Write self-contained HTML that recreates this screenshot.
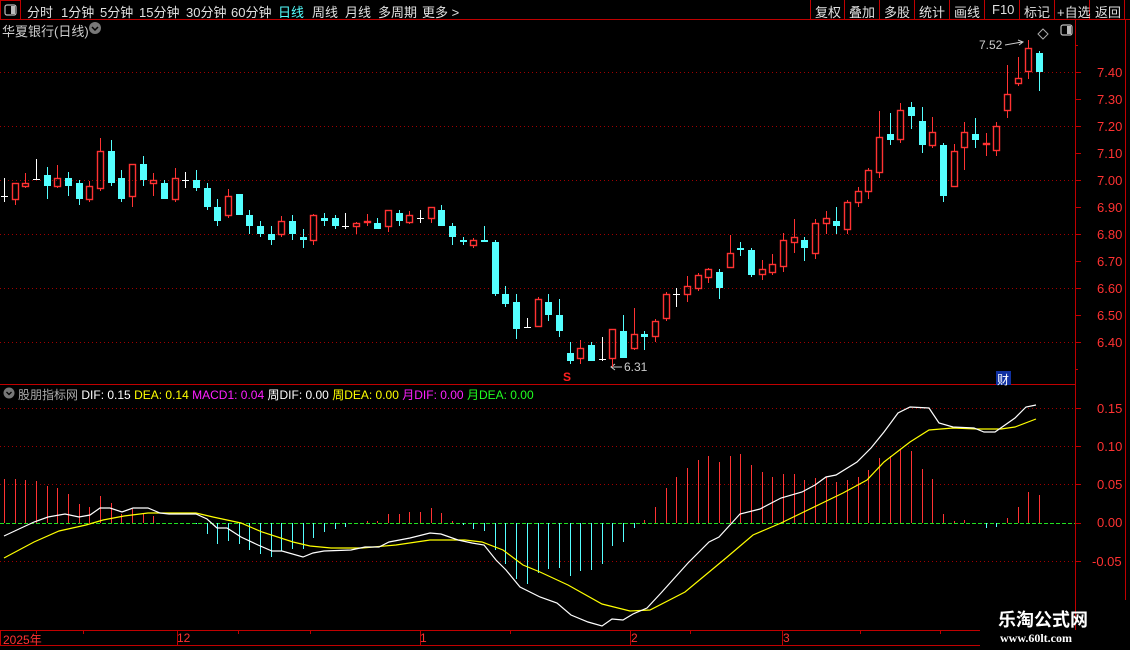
<!DOCTYPE html>
<html><head><meta charset="utf-8">
<style>
body{margin:0;background:#000;width:1130px;height:650px;overflow:hidden;position:relative;font-family:"Liberation Sans","Noto Sans CJK SC",sans-serif;}
.t{position:absolute;font-size:12px;color:#e0e0e0;white-space:nowrap;}
svg{position:absolute;left:0;top:0;}
</style></head><body>
<svg id="s" width="1130" height="650" xmlns="http://www.w3.org/2000/svg">
<g id="grid"></g>
<line x1="0" y1="19.5" x2="1130" y2="19.5" stroke="#c00000"/>
<rect x="0.5" y="0.5" width="20" height="19" fill="none" stroke="#c00000"/>
<rect x="5" y="5" width="11" height="10" rx="2" fill="none" stroke="#bbb" stroke-width="1.2"/>
<rect x="11" y="6" width="4" height="8" fill="#bbb"/>
<g stroke="#c00000">
<line x1="810.5" y1="0" x2="810.5" y2="19"/><line x1="844.5" y1="0" x2="844.5" y2="19"/><line x1="879.5" y1="0" x2="879.5" y2="19"/><line x1="914.5" y1="0" x2="914.5" y2="19"/><line x1="949.5" y1="0" x2="949.5" y2="19"/><line x1="984.5" y1="0" x2="984.5" y2="19"/><line x1="1019.5" y1="0" x2="1019.5" y2="19"/><line x1="1054.5" y1="0" x2="1054.5" y2="19"/><line x1="1089.5" y1="0" x2="1089.5" y2="19"/><line x1="1124.5" y1="0" x2="1124.5" y2="19"/>
<line x1="1075.5" y1="20" x2="1075.5" y2="630"/>
<line x1="1125.5" y1="20" x2="1125.5" y2="600"/>
<line x1="0" y1="384.5" x2="1075" y2="384.5"/>
<line x1="0" y1="630.5" x2="980" y2="630.5"/>
<line x1="0" y1="645.5" x2="980" y2="645.5"/>
</g>
<circle cx="95" cy="28" r="6" fill="#777"/><path d="M92 27 L95 30 L98 27" stroke="#000" stroke-width="1.5" fill="none"/>
<circle cx="9" cy="393" r="5.5" fill="#777"/><path d="M6.5 392 L9 394.5 L11.5 392" stroke="#000" stroke-width="1.3" fill="none"/>
<path d="M1043 29 L1048 34 L1043 39 L1038 34 Z" fill="none" stroke="#aaa"/>
<rect x="1061" y="25" width="11" height="10" rx="2" fill="none" stroke="#bbb" stroke-width="1.2"/><rect x="1067" y="26" width="4" height="8" fill="#bbb"/>
<path d="M1005 45 L1022 42 M1018 40 L1023 42 L1019 45" stroke="#ccc" fill="none"/>
<path d="M622 367 L612 367 M615 364 L611 367 L615 370" stroke="#ccc" fill="none"/>
<rect x="996" y="371" width="15" height="14" fill="#1030a0"/>
<g id="c"></g>
<g id="tick" stroke="#c00000"></g>
</svg>
<div class="t" style="left:27px;top:2px;font-size:13px">分时</div>
<div class="t" style="left:61px;top:2px;font-size:13px">1分钟</div>
<div class="t" style="left:100px;top:2px;font-size:13px">5分钟</div>
<div class="t" style="left:139px;top:2px;font-size:13px">15分钟</div>
<div class="t" style="left:186px;top:2px;font-size:13px">30分钟</div>
<div class="t" style="left:231px;top:2px;font-size:13px">60分钟</div>
<div class="t" style="left:278px;top:2px;font-size:13px;color:#54ffff">日线</div>
<div class="t" style="left:312px;top:2px;font-size:13px">周线</div>
<div class="t" style="left:345px;top:2px;font-size:13px">月线</div>
<div class="t" style="left:378px;top:2px;font-size:13px">多周期</div>
<div class="t" style="left:422px;top:2px;font-size:13px">更多 &gt;</div>
<div class="t" style="left:815px;top:2px;font-size:13px">复权</div>
<div class="t" style="left:849px;top:2px;font-size:13px">叠加</div>
<div class="t" style="left:884px;top:2px;font-size:13px">多股</div>
<div class="t" style="left:919px;top:2px;font-size:13px">统计</div>
<div class="t" style="left:954px;top:2px;font-size:13px">画线</div>
<div class="t" style="left:992px;top:2px;font-size:13px">F10</div>
<div class="t" style="left:1024px;top:2px;font-size:13px">标记</div>
<div class="t" style="left:1057px;top:2px;font-size:13px">+自选</div>
<div class="t" style="left:1095px;top:2px;font-size:13px">返回</div>
<div class="t" style="left:2px;top:21px;font-size:13px;color:#ccc">华夏银行(日线)</div>
<div class="t" style="left:979px;top:38px;color:#ccc">7.52</div>
<div class="t" style="left:624px;top:360px;color:#ccc">6.31</div>
<div class="t" style="left:563px;top:370px;color:#ff2020;font-weight:bold">S</div>
<div class="t" style="left:997px;top:371px;color:#fff">财</div>
<div class="t" style="left:18px;top:386px;font-size:12px"><span style="color:#aaa">股朋指标网</span> <span style="color:#fff">DIF: 0.15</span> <span style="color:#ffff00">DEA: 0.14</span> <span style="color:#ff20ff">MACD1: 0.04</span> <span style="color:#fff">周DIF: 0.00</span> <span style="color:#ffff00">周DEA: 0.00</span> <span style="color:#ff20ff">月DIF: 0.00</span> <span style="color:#20ff20">月DEA: 0.00</span></div>
<div class="t" style="left:1097px;top:65px;color:#ff3232;font-size:13px">7.40</div>
<div class="t" style="left:1097px;top:92px;color:#ff3232;font-size:13px">7.30</div>
<div class="t" style="left:1097px;top:119px;color:#ff3232;font-size:13px">7.20</div>
<div class="t" style="left:1097px;top:146px;color:#ff3232;font-size:13px">7.10</div>
<div class="t" style="left:1097px;top:173px;color:#ff3232;font-size:13px">7.00</div>
<div class="t" style="left:1097px;top:200px;color:#ff3232;font-size:13px">6.90</div>
<div class="t" style="left:1097px;top:227px;color:#ff3232;font-size:13px">6.80</div>
<div class="t" style="left:1097px;top:254px;color:#ff3232;font-size:13px">6.70</div>
<div class="t" style="left:1097px;top:281px;color:#ff3232;font-size:13px">6.60</div>
<div class="t" style="left:1097px;top:308px;color:#ff3232;font-size:13px">6.50</div>
<div class="t" style="left:1097px;top:335px;color:#ff3232;font-size:13px">6.40</div>
<div class="t" style="left:1097px;top:401px;color:#ff3232;font-size:13px">0.15</div>
<div class="t" style="left:1097px;top:439px;color:#ff3232;font-size:13px">0.10</div>
<div class="t" style="left:1097px;top:477px;color:#ff3232;font-size:13px">0.05</div>
<div class="t" style="left:1097px;top:515px;color:#ff3232;font-size:13px">0.00</div>
<div class="t" style="left:1092px;top:554px;color:#ff3232;font-size:13px">-0.05</div>
<div class="t" style="left:3px;top:631px;color:#ff3232">2025年</div>
<div class="t" style="left:177px;top:631px;color:#ff3232">12</div>
<div class="t" style="left:420px;top:631px;color:#ff3232">1</div>
<div class="t" style="left:631px;top:631px;color:#ff3232">2</div>
<div class="t" style="left:783px;top:631px;color:#ff3232">3</div>
<div class="t" style="left:998px;top:606px;color:#fff;font-size:18px;font-weight:bold">乐淘公式网</div>
<div class="t" style="left:1000px;top:631px;color:#fff;font-size:12px;font-family:'Liberation Serif',serif;font-weight:bold">www.60lt.com</div>
<script>
var NS="http://www.w3.org/2000/svg",g=document.getElementById('c'),gr=document.getElementById('grid'),tk=document.getElementById('tick');
function el(p,t,a){var e=document.createElementNS(NS,t);for(var k in a)e.setAttribute(k,a[k]);p.appendChild(e);return e;}
[72,126,180,234,288,342,408,446,484,561].forEach(function(y){el(gr,'line',{x1:0,y1:y+.5,x2:1075,y2:y+.5,stroke:'#a00000','stroke-dasharray':'1 3'});});
el(gr,'line',{x1:0,y1:523.5,x2:1075,y2:523.5,stroke:'#20e020','stroke-dasharray':'4 2'});
for(var y=72;y<=342;y+=27){el(tk,'line',{x1:1075,y1:y+.5,x2:1081,y2:y+.5});}
for(var y=45;y<=370;y+=27){el(tk,'line',{x1:1075,y1:y+.5,x2:1078,y2:y+.5});}
[408,446,484,523,561].forEach(function(y){el(tk,'line',{x1:1075,y1:y+.5,x2:1081,y2:y+.5});});
[0,36,83,177,238,310,420,510,630,690,782,860,940].forEach(function(x){el(tk,'line',{x1:x+.5,y1:630,x2:x+.5,y2:(x==177||x==420||x==630||x==782||x==0)?645:634});});
var C="W 196 196 178 202|R 183 200 183 205|R 183 187 173 188|W 179 179 159 180|C 175 186 167 199|R 178 187 165 188|C 178 186 172 196|C 183 199 180 205|R 186 200 181 202|R 151 189 138 191|C 151 183 140 186|C 178 199 170 202|R 164 197 164 207|C 164 180 156 186|R 180 184 173 196|C 183 199 180 199|R 178 200 168 202|W 180 180 172 188|C 180 188 170 191|C 188 207 183 210|C 207 221 199 226|R 196 216 189 218|C 194 215 194 215|C 215 226 210 234|C 226 234 221 237|C 234 240 226 245|R 221 235 216 237|C 221 234 215 240|C 237 240 229 248|R 215 241 214 245|C 218 221 213 226|C 218 226 215 229|W 226 226 213 229|R 223 227 222 234|R 221 223 214 226|C 223 229 218 229|R 210 227 210 232|C 213 221 210 226|R 215 223 211 224|W 218 218 210 223|R 207 219 207 223|C 210 226 205 226|C 226 237 223 245|C 240 242 237 245|R 240 246 238 248|C 240 242 226 242|C 242 294 240 296|C 294 304 286 307|C 302 329 294 339|W 327 327 318 328|R 299 327 297 327|C 302 315 294 321|C 315 331 299 337|C 353 361 342 364|R 348 359 340 364|C 345 361 342 361|W 359 359 337 361|R 329 359 329 367|C 331 358 315 358|R 334 349 308 350|C 334 337 331 350|R 321 337 319 342|R 294 319 292 321|W 294 294 288 307|R 286 295 276 302|R 275 289 273 291|R 269 278 268 283|C 272 288 269 299|R 253 268 235 268|C 248 250 242 256|C 250 275 248 277|R 269 275 260 280|R 264 273 254 275|R 240 267 233 272|R 237 243 219 253|C 240 248 237 261|R 223 254 219 259|R 218 224 211 234|C 221 226 207 234|R 202 230 200 234|R 191 203 187 207|R 170 192 168 199|R 137 173 111 178|C 134 140 113 145|R 110 140 103 143|C 107 116 102 129|C 121 145 107 153|R 132 146 117 148|C 145 196 143 202|R 151 187 144 187|R 132 148 122 170|C 134 140 118 148|R 143 145 133 156|R 126 151 122 156|R 94 111 65 118|R 78 84 57 86|R 48 72 40 79|C 53 72 51 91".split('|');
C.forEach(function(s,i){var p=s.split(' '),t=p[0],a=+p[1],b=+p[2],h=+p[3],l=+p[4],x=Math.round(4+10.67*i);
 var col=t=='R'?'#ff3232':t=='C'?'#54ffff':'#ffffff';
 if(t=='W'){el(g,'line',{x1:x+.5,y1:h,x2:x+.5,y2:l,stroke:col});el(g,'line',{x1:x-3,y1:a+.5,x2:x+4,y2:a+.5,stroke:col});return;}
 if(h<a)el(g,'line',{x1:x+.5,y1:h,x2:x+.5,y2:a,stroke:col});
 if(l>b)el(g,'line',{x1:x+.5,y1:b,x2:x+.5,y2:l,stroke:col});
 if(b-a<2)b=a+2;
 if(t=='R')el(g,'rect',{x:x-2.5,y:a+.5,width:6,height:b-a-1,fill:'none',stroke:col,'stroke-width':1.4});
 else el(g,'rect',{x:x-3,y:a,width:7,height:b-a,fill:col});
});
var H={0:479,1:479,2:480,3:481,4:486,5:488,6:494,7:504,8:507,9:496,10:503,11:514,12:509,13:513,14:516,18:524,19:534,20:544,21:541,22:544,23:550,24:554,25:557,26:551,27:549,28:549,29:538,30:532,31:529,32:527,34:521,35:521,36:514,37:514,38:512,39:512,40:508,41:513,42:521,43:525,44:529,45:531,46:550,47:564,48:579,49:584,50:573,51:569,52:568,53:576,54:571,55:570,56:564,57:546,58:542,59:528,60:520,61:507,62:488,63:477,64:468,65:460,66:456,67:462,68:456,69:454,70:465,71:472,72:477,73:474,74:474,75:480,76:478,77:477,78:482,79:480,80:477,81:470,82:458,83:456,84:449,85:451,86:469,87:479,88:514,89:521,90:520,92:528,93:527,94:518,95:507,96:492,97:495};
for(var k in H){var x=Math.round(4+10.67*k)+.5,v=H[k];el(g,'line',{x1:x,y1:523,x2:x,y2:v,stroke:v<523?'#ff3232':'#54ffff'});}
var W="4,536 34,522 48,517 65,514 79,517 90,515 100,508 110,508 122,512 133,508 148,508 160,513 169,514 196,514 207,519 217,528 227,528 241,537 258,545 272,551 282,551 303,557 313,553 324,551 351,550 365,547 379,547 389,542 410,538 430,533 441,534 458,540 472,543 484,545 496,560 506,570 520,587 540,597 557,603 571,615 588,622 602,626 612,619 623,620 633,614 647,608 661,593 688,563 709,542 719,537 740,514 760,509 781,498 802,492 815,485 826,477 836,475 857,462 871,448 884,432 898,413 910,407 929,408 939,423 953,427 974,428 984,432 995,432 1015,418 1026,407 1036,405";
var Y="4,558 34,542 59,531 86,525 103,520 124,516 148,513 196,513 213,517 241,523 262,532 293,542 310,546 331,548 362,548 396,545 430,540 465,540 482,542 503,550 523,565 540,572 568,585 602,604 630,611 650,610 685,592 726,558 753,535 781,523 843,493 867,480 884,462 910,442 929,430 953,428 977,429 1001,429 1015,427 1036,419";
el(g,'polyline',{points:Y,fill:'none',stroke:'#ffff00','stroke-width':1.2});
el(g,'polyline',{points:W,fill:'none',stroke:'#ffffff','stroke-width':1.2});
</script>
</body></html>
